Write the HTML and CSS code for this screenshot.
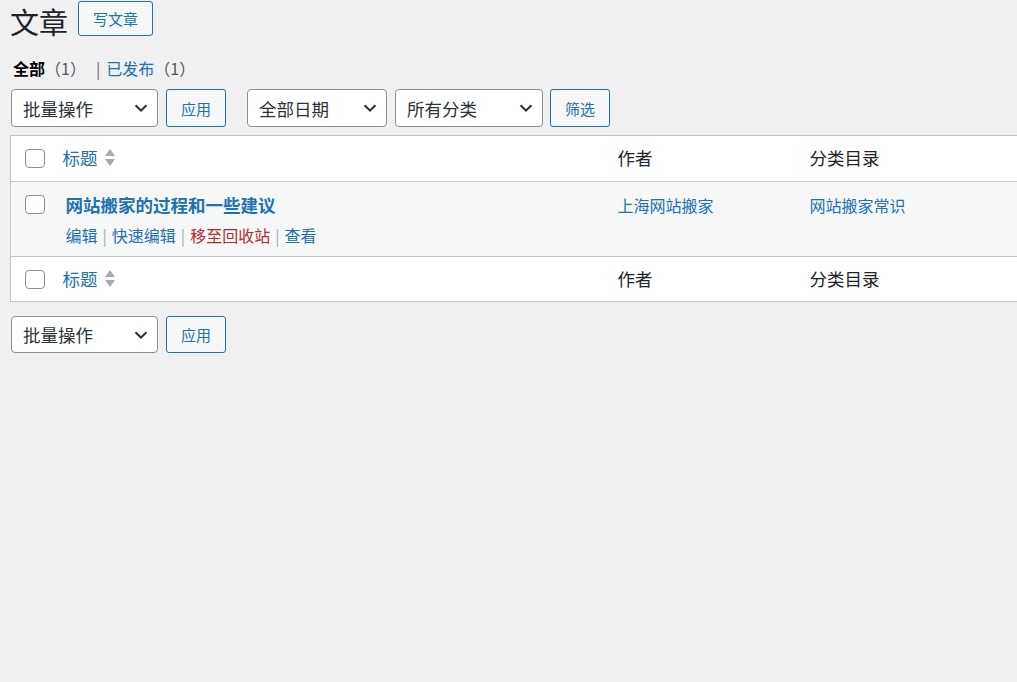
FILE: index.html
```html
<!DOCTYPE html>
<html lang="zh-CN">
<head>
<meta charset="utf-8">
<title>文章</title>
<link rel="stylesheet" href="styles.css">
</head>
<body>
<div class="wrap">
  <div class="page-head">
    <h1 class="page-title">文章</h1>
    <a class="btn btn-new">写文章</a>
  </div>

  <ul class="subsubsub">
    <li class="current">全部<span class="count">（1）</span></li>
    <li class="sep">|</li>
    <li><a class="link">已发布<span class="count-link">（1）</span></a></li>
  </ul>

  <div class="tablenav">
    <div class="select w-bulk"><span>批量操作</span><svg class="chev" viewBox="0 0 14 8" width="14" height="8"><path d="M1.5 1.2 L7 6.5 L12.5 1.2" fill="none" stroke="#2c3338" stroke-width="2"/></svg></div>
    <a class="btn btn-apply">应用</a>
    <div class="select w-date"><span>全部日期</span><svg class="chev" viewBox="0 0 14 8" width="14" height="8"><path d="M1.5 1.2 L7 6.5 L12.5 1.2" fill="none" stroke="#2c3338" stroke-width="2"/></svg></div>
    <div class="select w-cat"><span>所有分类</span><svg class="chev" viewBox="0 0 14 8" width="14" height="8"><path d="M1.5 1.2 L7 6.5 L12.5 1.2" fill="none" stroke="#2c3338" stroke-width="2"/></svg></div>
    <a class="btn btn-apply">筛选</a>
  </div>

  <table class="list">
    <colgroup>
      <col class="c-cb"><col class="c-title"><col class="c-author"><col class="c-cat">
    </colgroup>
    <thead>
      <tr>
        <td class="cb"><span class="checkbox"></span></td>
        <th class="h-title"><a class="link">标题</a><svg class="sort" viewBox="0 0 10 18" width="10" height="18"><path d="M5 0 L10 7 L0 7 Z M0 10 L10 10 L5 17 Z" fill="#a7aaad"/></svg></th>
        <th>作者</th>
        <th>分类目录</th>
      </tr>
    </thead>
    <tbody>
      <tr class="alt">
        <td class="cb"><span class="checkbox"></span></td>
        <td class="title-cell">
          <a class="row-title">网站搬家的过程和一些建议</a>
          <div class="row-actions">
            <a class="link">编辑</a><span class="bar">|</span><a class="link">快速编辑</a><span class="bar">|</span><a class="trash">移至回收站</a><span class="bar">|</span><a class="link">查看</a>
          </div>
        </td>
        <td class="meta"><a class="link">上海网站搬家</a></td>
        <td class="meta"><a class="link">网站搬家常识</a></td>
      </tr>
    </tbody>
    <tfoot>
      <tr>
        <td class="cb"><span class="checkbox"></span></td>
        <th class="h-title"><a class="link">标题</a><svg class="sort" viewBox="0 0 10 18" width="10" height="18"><path d="M5 0 L10 7 L0 7 Z M0 10 L10 10 L5 17 Z" fill="#a7aaad"/></svg></th>
        <th>作者</th>
        <th>分类目录</th>
      </tr>
    </tfoot>
  </table>

  <div class="tablenav bottom">
    <div class="select w-bulk"><span>批量操作</span><svg class="chev" viewBox="0 0 14 8" width="14" height="8"><path d="M1.5 1.2 L7 6.5 L12.5 1.2" fill="none" stroke="#2c3338" stroke-width="2"/></svg></div>
    <a class="btn btn-apply">应用</a>
  </div>
</div>
</body>
</html>
```

FILE: styles.css
```css
html, body {
  margin: 0;
  padding: 0;
  background: #f0f0f1;
  overflow: hidden;
}
body {
  font-family: "Noto Sans CJK SC", "Microsoft YaHei", "Noto Sans", sans-serif;
  color: #1d2327;
  font-size: 16px;
}
.wrap {
  padding-left: 10px;
  overflow: hidden;
  height: 682px;
}
a { text-decoration: none; }
.link { color: #2271b1; }

.page-head {
  display: flex;
  align-items: flex-start;
  gap: 10px;
  height: 40px;
}
.page-title {
  margin: 0;
  padding-top: 3px;
  font-size: 29px;
  font-weight: 400;
  line-height: 37px;
}
.btn {
  display: inline-flex;
  align-items: center;
  justify-content: center;
  box-sizing: border-box;
  border: 1px solid #2271b1;
  border-radius: 3px;
  background: #f6f7f7;
  color: #2271b1;
  font-size: 15px;
}
.btn-new {
  width: 75px;
  height: 35px;
  margin-top: 1px;
}
.subsubsub {
  list-style: none;
  margin: 17px 0 0 3px;
  padding: 0;
  display: flex;
  font-size: 16px;
  line-height: 22px;
  height: 22px;
}
.subsubsub .current { font-weight: 700; color: #000; }
.subsubsub .count { font-weight: 400; color: #50575e; }
.subsubsub .count-link { color: #50575e; }
.subsubsub .sep { color: #646970; margin: 0 6px 0 10px; }

.tablenav {
  display: flex;
  align-items: center;
  margin-top: 10px;
  height: 38px;
  padding-left: 1px;
}
.tablenav.bottom { margin-top: 14px; height: 37px; }
.select {
  box-sizing: border-box;
  height: 100%;
  border: 1px solid #8c8f94;
  border-radius: 4px;
  background: #fff;
  display: flex;
  align-items: center;
  justify-content: space-between;
  padding: 0 9px 0 11px;
  font-size: 17.5px;
  color: #2c3338;
}
.chev { flex: none; }
.w-bulk { width: 147px; margin-right: 8px; }
.w-date { width: 140px; margin-left: 21px; margin-right: 8px; }
.w-cat { width: 148px; margin-right: 7px; }
.btn-apply { width: 60px; height: 100%; }

.list {
  margin-top: 8px;
  width: 1100px;
  border-collapse: collapse;
  table-layout: fixed;
  background: #fff;
  border: 1px solid #c3c4c7;
}
.c-cb { width: 42px; }
.c-title { width: 555px; }
.c-author { width: 192px; }
.list th, .list td {
  vertical-align: top;
  text-align: left;
  font-weight: 400;
  padding: 10px 10px;
  font-size: 17.5px;
  line-height: 24px;
  color: #1d2327;
}
.list thead tr { border-bottom: 1px solid #c3c4c7; height: 46px; }
.list tfoot tr { border-top: 1px solid #c3c4c7; height: 44px; }
.list td.cb { padding: 13px 0 0 14px; }
.checkbox {
  display: block;
  box-sizing: border-box;
  width: 20px;
  height: 19px;
  border: 1px solid #8c8f94;
  border-radius: 4px;
  background: #fff;
}
.h-title { display: flex; align-items: center; }
.h-title .link { color: #2271b1; }
.sort { margin-left: 7px; }
.alt { background: #f6f7f7; }
.list td.title-cell { padding: 10px 10px 9px 13px; }
.row-title {
  display: block;
  color: #2271b1;
  font-weight: 700;
  font-size: 17.5px;
  line-height: 26px;
}
.row-actions {
  margin-top: 5px;
  font-size: 16px;
  line-height: 24px;
}
.row-actions .bar { color: #a7aaad; margin: 0 5px; }
.trash { color: #b32d2e; }
.list td.meta { font-size: 16px; line-height: 26px; }
.list td.meta .link { color: #2271b1; }
```
